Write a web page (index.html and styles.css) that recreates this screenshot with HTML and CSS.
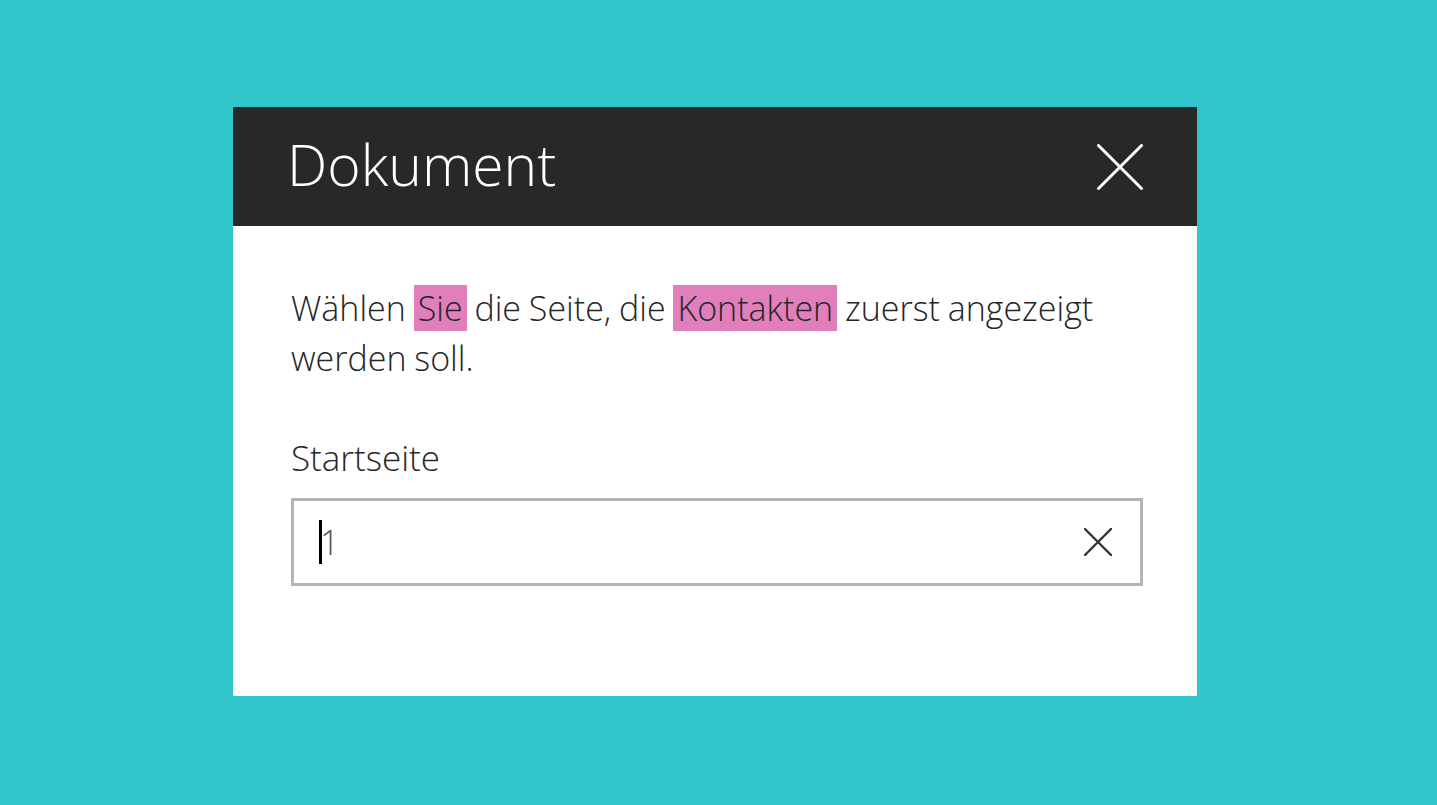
FILE: index.html
```html
<!DOCTYPE html>
<html lang="de">
<head>
<meta charset="utf-8">
<title>Dokument</title>
<link rel="stylesheet" href="styles.css">
</head>
<body>
<div class="stage">
  <div class="dialog">
    <div class="dialog-header">
      <h1 class="dialog-title">Dokument</h1>
      <button class="close-btn" aria-label="Schließen">
        <svg width="46" height="46" viewBox="0 0 46 46"><path d="M1.5 1.5 L44.5 44.5 M44.5 1.5 L1.5 44.5" stroke="#ffffff" stroke-width="3" stroke-linecap="round" fill="none"/></svg>
      </button>
    </div>
    <div class="dialog-body">
      <p class="desc">Wählen <span class="hl">Sie</span> die Seite, die <span class="hl">Kontakten</span> zuerst angezeigt werden soll.</p>
      <label class="field-label">Startseite</label>
      <div class="field">
        <div class="field-value"><span class="caret"></span><span class="val">1</span></div>
        <span class="clear-btn">
          <svg width="28" height="28" viewBox="0 0 28 28"><path d="M1 1 L27 27 M27 1 L1 27" stroke="#333333" stroke-width="2.4" stroke-linecap="round" fill="none"/></svg>
        </span>
      </div>
    </div>
  </div>
</div>
</body>
</html>
```

FILE: styles.css
```css
html, body {
  margin: 0;
  padding: 0;
}
body {
  background: #31c6cc;
  font-family: "Open Sans", "Noto Sans", sans-serif;
  width: 1437px;
  height: 805px;
  overflow: hidden;
}
.stage {
  padding: 107px 0 0 233px;
}
.dialog {
  width: 964px;
  height: 589px;
  background: #ffffff;
  display: flex;
  flex-direction: column;
}
.dialog-header {
  height: 119px;
  background: #282828;
  display: flex;
  align-items: center;
  justify-content: space-between;
  padding: 0 54px 0 54px;
  box-sizing: border-box;
}
.dialog-title {
  margin: 0;
  color: #ffffff;
  font-weight: 300;
  font-size: 57px;
  line-height: 64px;
  position: relative;
  top: -3px;
}
.close-btn {
  background: none;
  border: 0;
  padding: 0;
  width: 46px;
  height: 46px;
  display: block;
}
.close-btn svg { display: block; }
.dialog-body {
  padding: 57px 54px 0 58px;
  display: flex;
  flex-direction: column;
}
.desc {
  margin: 0;
  color: #262626;
  font-size: 34px;
  line-height: 50px;
  font-weight: 300;
  word-spacing: -1px;
}
.hl {
  background: #e07fbc;
  padding: 0 4px;
}
.field-label {
  margin-top: 50px;
  color: #262626;
  font-size: 35px;
  line-height: 50px;
  font-weight: 300;
}
.field {
  margin-top: 15px;
  height: 88px;
  border: 3px solid #b4b4b4;
  box-sizing: border-box;
  display: flex;
  align-items: center;
  justify-content: space-between;
  padding: 0 28px 0 25px;
}
.field-value {
  display: flex;
  align-items: center;
  color: #555555;
  font-size: 34px;
  font-weight: 300;
}
.caret {
  width: 3px;
  height: 44px;
  background: #000000;
  margin-right: -2px;
}
.val {
  line-height: 44px;
}
.clear-btn {
  width: 28px;
  height: 28px;
  display: block;
}
.clear-btn svg { display: block; }
```
